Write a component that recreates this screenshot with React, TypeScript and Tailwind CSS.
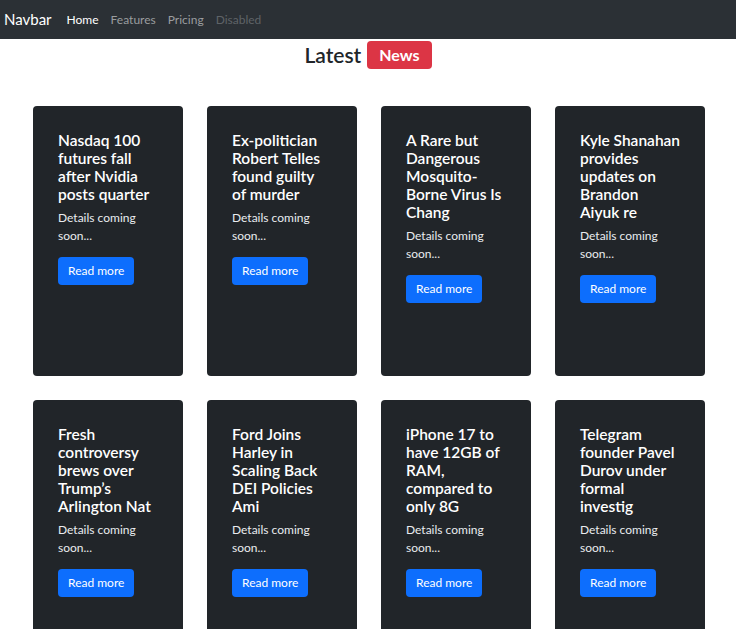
const items = [
  ['Nasdaq 100', 'futures fall', 'after Nvidia', 'posts quarter'],
  ['Ex-politician', 'Robert Telles', 'found guilty', 'of murder'],
  ['A Rare but', 'Dangerous', 'Mosquito-', 'Borne Virus Is', 'Chang'],
  ['Kyle Shanahan', 'provides', 'updates on', 'Brandon', 'Aiyuk re'],
  ['Fresh', 'controversy', 'brews over', 'Trump’s', 'Arlington Nat'],
  ['Ford Joins', 'Harley in', 'Scaling Back', 'DEI Policies', 'Ami'],
  ['iPhone 17 to', 'have 12GB of', 'RAM,', 'compared to', 'only 8G'],
  ['Telegram', 'founder Pavel', 'Durov under', 'formal', 'investig'],
]

function NewsCard({ lines }: { lines: string[] }) {
  return (
    <div className="h-[270px] w-[150px] rounded-[4px] bg-[#212529] px-[25px] pt-[25px] text-white">
      <h5 className="text-[15.5px] font-semibold leading-[18px]">
        {lines.map((l) => (
          <span key={l} className="block whitespace-nowrap">
            {l}
          </span>
        ))}
      </h5>
      <p className="mt-[6px] text-[12px] leading-[18px] text-[#e9ecef]">Details coming soon...</p>
      <button className="mt-[12px] h-[28px] rounded-[4px] bg-[#0d6efd] px-[10px] text-[12px] text-white">
        Read more
      </button>
    </div>
  )
}

export default function App() {
  return (
    <div className="min-h-screen bg-white font-['Lato',sans-serif]">
      <nav className="flex h-[39px] items-center bg-[#2b3035] px-[4px]">
        <span className="mr-[15px] text-[15px] text-white">Navbar</span>
        <ul className="flex items-center gap-[12px] text-[12px]">
          <li className="text-white">Home</li>
          <li className="text-[#9a9d9f]">Features</li>
          <li className="text-[#9a9d9f]">Pricing</li>
          <li className="text-[#5f6367]">Disabled</li>
        </ul>
      </nav>

      <h2 className="mt-[1px] flex h-[30px] items-center justify-center gap-[6px] text-[21px] font-semibold text-[#212529]">
        Latest
        <span className="flex h-[28px] items-center rounded-[4px] bg-[#dc3545] px-[12px] text-[16px] font-bold text-white">
          News
        </span>
      </h2>

      <div className="mt-[36px] flex flex-wrap gap-[24px] pl-[33px]">
        {items.map((t) => (
          <NewsCard key={t.join(' ')} lines={t} />
        ))}
      </div>
    </div>
  )
}
